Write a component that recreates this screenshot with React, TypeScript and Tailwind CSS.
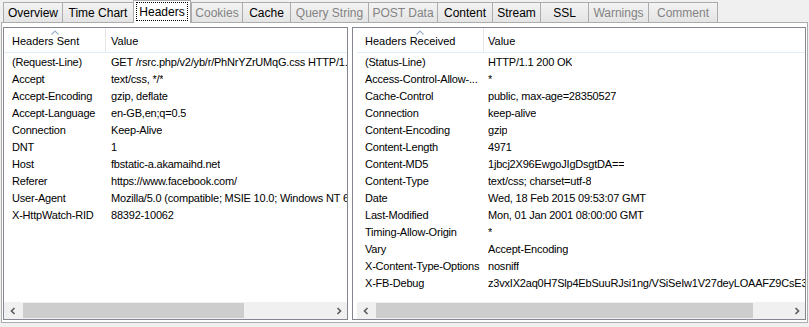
import React from 'react';

const tabs = [
  { label: 'Overview', w: 'w-[59px]' },
  { label: 'Time Chart', w: 'w-[71px]' },
  { label: 'Headers', w: 'w-[58px]', active: true },
  { label: 'Cookies', w: 'w-[51px]', disabled: true },
  { label: 'Cache', w: 'w-[48px]' },
  { label: 'Query String', w: 'w-[78px]', disabled: true },
  { label: 'POST Data', w: 'w-[69px]', disabled: true },
  { label: 'Content', w: 'w-[55px]' },
  { label: 'Stream', w: 'w-[48px]' },
  { label: 'SSL', w: 'w-[48px]' },
  { label: 'Warnings', w: 'w-[60px]', disabled: true },
  { label: 'Comment', w: 'w-[70px]', disabled: true, last: true },
];

const sent = [
  ['(Request-Line)', 'GET /rsrc.php/v2/yb/r/PhNrYZrUMqG.css HTTP/1.1'],
  ['Accept', 'text/css, */*'],
  ['Accept-Encoding', 'gzip, deflate'],
  ['Accept-Language', 'en-GB,en;q=0.5'],
  ['Connection', 'Keep-Alive'],
  ['DNT', '1'],
  ['Host', 'fbstatic-a.akamaihd.net'],
  ['Referer', 'https://www.facebook.com/'],
  ['User-Agent', 'Mozilla/5.0 (compatible; MSIE 10.0; Windows NT 6.1; WOW64; Trident/6.0)'],
  ['X-HttpWatch-RID', '88392-10062'],
];

const received = [
  ['(Status-Line)', 'HTTP/1.1 200 OK'],
  ['Access-Control-Allow-...', '*'],
  ['Cache-Control', 'public, max-age=28350527'],
  ['Connection', 'keep-alive'],
  ['Content-Encoding', 'gzip'],
  ['Content-Length', '4971'],
  ['Content-MD5', '1jbcj2X96EwgoJIgDsgtDA=='],
  ['Content-Type', 'text/css; charset=utf-8'],
  ['Date', 'Wed, 18 Feb 2015 09:53:07 GMT'],
  ['Last-Modified', 'Mon, 01 Jan 2001 08:00:00 GMT'],
  ['Timing-Allow-Origin', '*'],
  ['Vary', 'Accept-Encoding'],
  ['X-Content-Type-Options', 'nosniff'],
  ['X-FB-Debug', 'z3vxIX2aq0H7Slp4EbSuuRJsi1ng/VSiSeIw1V27deyLOAAFZ9CsE3aQ=='],
];

function Chevron({ dir }: { dir: 'left' | 'right' }) {
  return (
    <svg width="8" height="8" viewBox="0 0 8 8">
      <polyline
        points={dir === 'left' ? '5.5,1 2.5,4 5.5,7' : '2.5,1 5.5,4 2.5,7'}
        fill="none"
        stroke="#606060"
        strokeWidth="1.7"
      />
    </svg>
  );
}

function ScrollBar({ thumb }: { thumb: string }) {
  return (
    <div className="flex h-[17px] shrink-0 items-center bg-[#f0f0f0]">
      <div className="flex h-[17px] w-[17px] items-center justify-center">
        <Chevron dir="left" />
      </div>
      <div className="flex h-[17px] flex-1 items-center px-[2px]">
        <div className={`h-[15px] ${thumb} bg-[#cdcdcd]`} />
      </div>
      <div className="flex h-[17px] w-[17px] items-center justify-center">
        <Chevron dir="right" />
      </div>
    </div>
  );
}

function HeaderPanel({
  title,
  rows,
  nameW,
  valuePad,
  thumb,
  className,
}: {
  title: string;
  rows: string[][];
  nameW: string;
  valuePad: string;
  thumb: string;
  className: string;
}) {
  return (
    <div className={`flex h-[293px] flex-col border border-[#828790] bg-white ${className}`}>
      <div className="flex h-[24px] shrink-0 text-[11px] text-black">
        <div className={`relative flex ${nameW} shrink-0 items-center border-r border-[#e5e5e5] pl-[8px] pt-[3px]`}>
          <svg className="absolute left-1/2 top-[2px] -translate-x-1/2" width="8" height="5" viewBox="0 0 8 5">
            <polyline points="0.5,4.5 4,1 7.5,4.5" fill="none" stroke="#9fb1c9" strokeWidth="1.2" />
          </svg>
          {title}
        </div>
        <div className={`flex items-center pt-[3px] ${valuePad}`}>Value</div>
      </div>
      <div className="h-px shrink-0 bg-[#e3ebf7]" />
      <div className="flex-1 overflow-hidden pt-px text-[11px] tracking-[-0.2px] text-black">
        {rows.map(([name, value]) => (
          <div key={name} className="flex h-[17px] items-center whitespace-nowrap">
            <div className={`${nameW} shrink-0 overflow-hidden pl-[8px]`}>{name}</div>
            <div className={`min-w-0 overflow-hidden ${valuePad}`}>{value}</div>
          </div>
        ))}
      </div>
      <ScrollBar thumb={thumb} />
    </div>
  );
}

export default function App() {
  return (
    <div
      className="h-[327px] w-[809px] overflow-hidden bg-[#f0f0f0]"
      style={{ fontFamily: '"Liberation Sans", Arial, sans-serif' }}
    >
      <div className="relative z-10 flex h-[22px] items-end pl-[3px] text-[12px]">
        {tabs.map((t) =>
          t.active ? (
            <div
              key={t.label}
              className={`relative -mb-px flex h-[23px] ${t.w} shrink-0 items-center justify-center border-x border-t border-[#acacac] bg-white pb-[1px] text-black`}
            >
              <span className="absolute inset-x-[2px] bottom-[2px] top-[1px] border border-dotted border-black" />
              {t.label}
            </div>
          ) : (
            <div
              key={t.label}
              className={`flex h-[20px] ${t.w} shrink-0 items-center justify-center border-l border-t border-[#acacac] bg-linear-to-b from-[#f3f3f3] to-[#e4e4e4] ${
                t.last ? 'border-r' : ''
              } ${t.disabled ? 'text-[#838383]' : 'text-black'}`}
            >
              {t.label}
            </div>
          )
        )}
      </div>
      <div className="ml-px flex h-[301px] w-[807px] gap-[4px] border border-[#acacac] bg-white px-px pb-[2px] pt-[4px]">
        <HeaderPanel
          title="Headers Sent"
          rows={sent}
          nameW="w-[102px]"
          valuePad="pl-[5px]"
          thumb="w-[221px]"
          className="w-[345px] shrink-0"
        />
        <HeaderPanel
          title="Headers Received"
          rows={received}
          nameW="w-[127px]"
          valuePad="pl-[4px]"
          thumb="w-[377px]"
          className="flex-1 min-w-0 pl-[4px]"
        />
      </div>
    </div>
  );
}
